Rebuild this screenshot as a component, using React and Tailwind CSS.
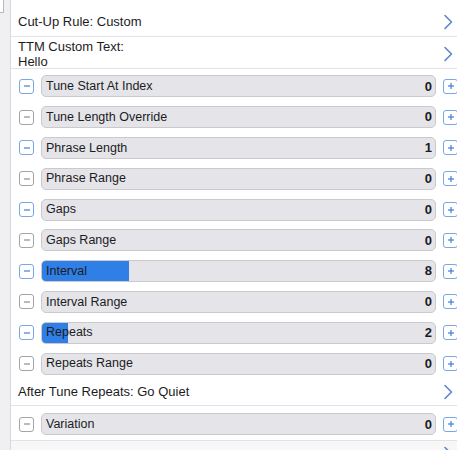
import React from "react";

const rows = [
  { label: "Tune Start At Index", value: 0, active: true },
  { label: "Tune Length Override", value: 0 },
  { label: "Phrase Length", value: 1, active: true },
  { label: "Phrase Range", value: 0 },
  { label: "Gaps", value: 0, active: true },
  { label: "Gaps Range", value: 0 },
  { label: "Interval", value: 8, active: true, fill: 87 },
  { label: "Interval Range", value: 0 },
  { label: "Repeats", value: 2, active: true, fill: 26 },
  { label: "Repeats Range", value: 0 },
];

function Chevron() {
  return (
    <svg width="10" height="16" viewBox="0 0 10 16" className="shrink-0">
      <path d="M2 1.5 L8.5 8 L2 14.5" fill="none" stroke="#5f86c4" strokeWidth="1.6" strokeLinecap="round" strokeLinejoin="round" />
    </svg>
  );
}

function StepButton({ plus, active }) {
  const color = active ? "border-[#79a6e6] text-[#3f7fdc]" : "border-[#a3a3a8] text-[#8e8e93]";
  return (
    <div className={`flex h-[15px] w-[15px] shrink-0 items-center justify-center rounded-[3px] border-[1.5px] bg-white ${color}`}>
      <svg width="8" height="8" viewBox="0 0 8 8">
        <path d="M1 4 H7" stroke="currentColor" strokeWidth="1.2" />
        {plus && <path d="M4 1 V7" stroke="currentColor" strokeWidth="1.2" />}
      </svg>
    </div>
  );
}

function SliderRow({ label, value, active, fill }) {
  return (
    <div className="flex h-[30.8px] items-center pl-[8px]">
      <StepButton active={active} />
      <div className="relative ml-[7px] flex h-[22px] w-[395px] items-center overflow-hidden rounded-[5px] border border-[#c9c9ce] bg-[#e4e4e9]">
        {fill && (
          <div className="absolute inset-y-0 left-0 bg-[#2f7fe6]" style={{ width: fill }} />
        )}
        <span className="relative flex-1 pl-[4px] text-[12.5px] text-[#1c1c1e]">{label}</span>
        <span className="relative pr-[3px] text-[13px] font-bold text-[#1c1c1e]">{value}</span>
      </div>
      <div className="ml-[7px]">
        <StepButton plus active />
      </div>
    </div>
  );
}

export default function App() {
  return (
    <div className="flex h-[450px] w-[457px] overflow-hidden bg-white font-['Liberation_Sans',sans-serif] text-[#1c1c1e]">
      <div className="relative w-[11px] shrink-0 border-r border-[#d9d9dc] bg-[#f0f0f2]">
        <div className="absolute left-0 top-0 h-[13px] w-[4px] border-b border-r border-[#b9b9bd] bg-white" />
      </div>
      <div className="flex-1">
        <div className="flex h-[37px] items-center justify-between border-b border-[#e3e3e6] pl-[7px] pr-[5px] pt-[8px]">
          <span className="text-[13px]">Cut-Up Rule: Custom</span>
          <Chevron />
        </div>
        <div className="flex h-[32px] items-center justify-between border-b border-[#e3e3e6] pl-[7px] pr-[5px] pt-[2px]">
          <div className="flex flex-col text-[13px] leading-[15px]">
            <span>TTM Custom Text:</span>
            <span>Hello</span>
          </div>
          <Chevron />
        </div>
        <div className="pt-[2px]">
          {rows.map((r) => (
            <SliderRow key={r.label} {...r} />
          ))}
        </div>
        <div className="flex h-[27px] items-center justify-between border-b border-[#e3e3e6] pl-[7px] pr-[5px]">
          <span className="text-[13px]">After Tune Repeats: Go Quiet</span>
          <Chevron />
        </div>
        <div className="pt-[3px]">
          <SliderRow label="Variation" value={0} />
        </div>
        <div className="flex h-[28px] items-center justify-between border-t border-[#e3e3e6] bg-[#f7f7f8] pl-[7px] pr-[5px]">
          <span className="text-[13px]">Display Counter: Full</span>
          <Chevron />
        </div>
      </div>
    </div>
  );
}
